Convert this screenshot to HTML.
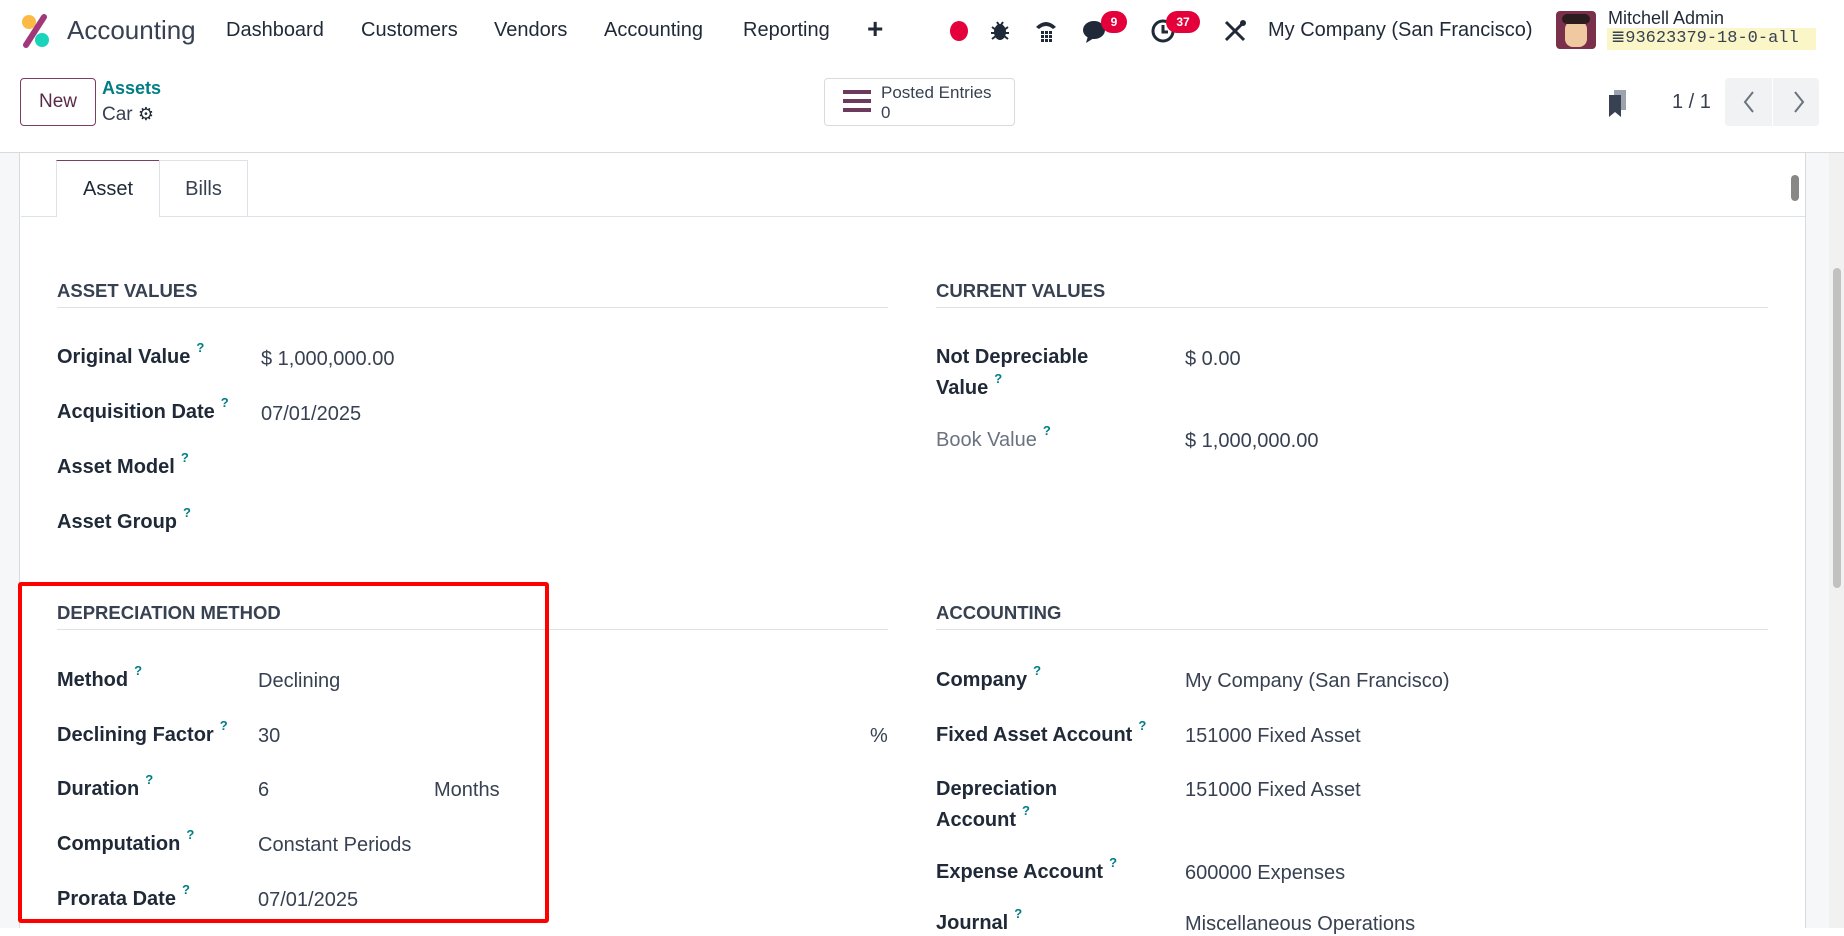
<!DOCTYPE html>
<html><head><meta charset="utf-8"><style>
*{box-sizing:border-box;margin:0;padding:0}
body{width:1844px;height:928px;overflow:hidden;background:#fff;font-family:"Liberation Sans",sans-serif;color:#212529;position:relative}
.a{position:absolute;white-space:nowrap}
.nav{font-size:20px;color:#1f2937;top:19px}
.lbl{font-size:20px;font-weight:bold;color:#1f2937;line-height:23px}
.lbl sup{color:#017e84;font-size:13px;font-weight:bold;margin-left:6px;line-height:0;position:relative;top:-3px}
.val{font-size:20px;color:#374151;line-height:23px}
.h{font-size:18.5px;font-weight:bold;color:#374151}
.line{position:absolute;height:1px;background:#dee2e6}
.badge{position:absolute;background:#e4003a;color:#fff;font-size:12px;font-weight:bold;border-radius:12px;height:22px;line-height:22px;text-align:center}
</style></head><body>
<!-- navbar -->
<svg class="a" style="left:20px;top:14px" width="32" height="34" viewBox="0 0 32 34"><circle cx="9" cy="8" r="7" fill="#fbb945"/><circle cx="22" cy="26" r="7" fill="#1ad3bb"/><path d="M24 3 L6 31" stroke="#a0387a" stroke-width="6" stroke-linecap="round"/></svg>
<div class="a" style="left:67px;top:15px;font-size:26px;color:#374151">Accounting</div>
<div class="a nav" style="left:226px">Dashboard</div>
<div class="a nav" style="left:361px">Customers</div>
<div class="a nav" style="left:494px">Vendors</div>
<div class="a nav" style="left:604px">Accounting</div>
<div class="a nav" style="left:743px">Reporting</div>
<div class="a" style="left:867px;top:13px;font-size:28px;font-weight:bold;color:#1f2937">+</div>
<div class="a" style="left:950px;top:21px;width:18px;height:20px;border-radius:50%;background:#e4003a"></div>
<svg class="a" style="left:990px;top:19px" width="20" height="22" viewBox="0 0 20 22"><ellipse cx="10" cy="13" rx="6" ry="8" fill="#1f2937"/><path d="M2 8l4 3M18 8l-4 3M1 14h5M19 14h-5M2 20l4-3M18 20l-4-3M7 3l2 3M13 3l-2 3" stroke="#1f2937" stroke-width="2"/></svg>
<svg class="a" style="left:1033px;top:17px" width="26" height="28" viewBox="0 0 26 28"><path d="M3 10 Q13 0 23 10 L20 12 Q13 6 6 12Z" fill="#1f2937"/><g fill="#1f2937"><rect x="8" y="14" width="3" height="3"/><rect x="12" y="14" width="3" height="3"/><rect x="16" y="14" width="3" height="3"/><rect x="8" y="18" width="3" height="3"/><rect x="12" y="18" width="3" height="3"/><rect x="16" y="18" width="3" height="3"/><rect x="8" y="22" width="3" height="3"/><rect x="12" y="22" width="3" height="3"/><rect x="16" y="22" width="3" height="3"/></g></svg>
<svg class="a" style="left:1082px;top:18px" width="26" height="26" viewBox="0 0 26 26"><ellipse cx="12" cy="12" rx="11" ry="9" fill="#1f2937"/><path d="M6 18 L4 25 L12 20Z" fill="#1f2937"/></svg>
<div class="badge" style="left:1101px;top:11px;width:26px">9</div>
<svg class="a" style="left:1150px;top:18px" width="26" height="26" viewBox="0 0 26 26"><circle cx="13" cy="13" r="10" fill="none" stroke="#1f2937" stroke-width="3"/><path d="M13 7v7h5" stroke="#1f2937" stroke-width="3" fill="none"/></svg>
<div class="badge" style="left:1166px;top:11px;width:34px">37</div>
<svg class="a" style="left:1222px;top:18px" width="26" height="26" viewBox="0 0 26 26"><path d="M4 4 L22 22" stroke="#1f2937" stroke-width="3"/><path d="M22 4 L4 22" stroke="#1f2937" stroke-width="3"/><circle cx="21" cy="5" r="3" fill="#1f2937"/></svg>
<div class="a" style="left:1268px;top:19px;font-size:20px;color:#1f2937">My Company (San Francisco)</div>
<div class="a" style="left:1556px;top:11px;width:40px;height:38px;border-radius:4px;background:#7a2f4a;overflow:hidden"><div style="position:absolute;left:9px;top:10px;width:22px;height:26px;background:#f0c9a0;border-radius:8px"></div><div style="position:absolute;left:6px;top:3px;width:28px;height:10px;background:#2b1d1d;border-radius:6px"></div></div>
<div class="a" style="left:1608px;top:8px;font-size:18px;color:#1f2937">Mitchell Admin</div>
<div class="a" style="left:1607px;top:28px;width:209px;height:22px;background:#fbf6c8;font-family:'Liberation Mono',monospace;font-size:17px;color:#374151;line-height:22px;padding-left:4px">≣93623379-18-0-all</div>
<!-- control panel -->
<div class="a" style="left:20px;top:78px;width:76px;height:48px;border:1px solid #7a3e63;border-radius:4px;font-size:19px;color:#5b2a47;text-align:center;line-height:46px">New</div>
<div class="a" style="left:102px;top:78px;font-size:18px;color:#017e84;font-weight:bold">Assets</div>
<div class="a" style="left:102px;top:104px;font-size:19px;color:#374151">Car <span style="font-size:18px;color:#1f2937">⚙</span></div>
<div class="a" style="left:824px;top:78px;width:191px;height:48px;border:1px solid #d8dadd;border-radius:4px"></div>
<div class="a" style="left:843px;top:90px;width:28px;height:4px;background:#6b3a5d;box-shadow:0 9px 0 #6b3a5d,0 18px 0 #6b3a5d"></div>
<div class="a" style="left:881px;top:83px;font-size:17px;color:#374151;line-height:20px">Posted Entries<br>0</div>
<svg class="a" style="left:1607px;top:89px" width="22" height="30" viewBox="0 0 22 30"><rect x="7" y="1" width="12" height="20" fill="#9ca3af"/><path d="M2 6h12v22l-6-5-6 5z" fill="#374151"/></svg>
<div class="a" style="left:1672px;top:91px;font-size:20px;color:#374151">1 / 1</div>
<div class="a" style="left:1725px;top:78px;width:94px;height:48px;background:#f1f2f4;border-radius:4px"></div>
<div class="a" style="left:1772px;top:78px;width:1px;height:48px;background:#fff"></div>
<svg class="a" style="left:1740px;top:90px" width="70" height="24"><path d="M13 2 L5 12 L13 22" stroke="#6b7280" stroke-width="2" fill="none"/><path d="M55 2 L63 12 L55 22" stroke="#6b7280" stroke-width="2" fill="none"/></svg>
<div class="line" style="left:0;top:152px;width:1844px;background:#d8dadd"></div>
<!-- content -->
<div class="a" style="left:0;top:153px;width:20px;height:775px;background:#f6f7f9;border-right:1px solid #d8dadd"></div>
<div class="a" style="left:1805px;top:153px;width:24px;height:775px;background:#f6f7f9;border-left:1px solid #d8dadd"></div>
<div class="a" style="left:1791px;top:175px;width:8px;height:26px;background:#888;border-radius:4px"></div>
<div class="a" style="left:1829px;top:153px;width:15px;height:775px;background:#f1f1f1"></div>
<div class="a" style="left:1833px;top:268px;width:8px;height:320px;background:#c1c1c1;border-radius:4px"></div>
<!-- tabs -->
<div class="line" style="left:21px;top:216px;width:1784px"></div>
<div class="a" style="left:56px;top:160px;width:104px;height:57px;border:1px solid #dee2e6;border-top:1px solid #7a3e63;border-bottom:none;background:#fff;font-size:20px;color:#1f2937;text-align:center;line-height:56px">Asset</div>
<div class="a" style="left:159px;top:160px;width:89px;height:56px;border:1px solid #dee2e6;border-bottom:none;font-size:20px;color:#374151;text-align:center;line-height:56px">Bills</div>
<!-- sections -->
<div class="a h" style="left:57px;top:280px">ASSET VALUES</div>
<div class="line" style="left:57px;top:307px;width:831px"></div>
<div class="a h" style="left:936px;top:280px">CURRENT VALUES</div>
<div class="line" style="left:936px;top:307px;width:832px"></div>
<div class="a lbl" style="left:57px;top:346px">Original Value<sup>?</sup></div><div class="a val" style="left:261px;top:348px">$ 1,000,000.00</div>
<div class="a lbl" style="left:57px;top:401px">Acquisition Date<sup>?</sup></div><div class="a val" style="left:261px;top:403px">07/01/2025</div>
<div class="a lbl" style="left:57px;top:456px">Asset Model<sup>?</sup></div>
<div class="a lbl" style="left:57px;top:511px">Asset Group<sup>?</sup></div>
<div class="a lbl" style="left:936px;top:346px;line-height:31px;margin-top:-4px">Not Depreciable<br>Value<sup>?</sup></div><div class="a val" style="left:1185px;top:348px">$ 0.00</div>
<div class="a lbl" style="left:936px;top:429px;color:#6b7280;font-weight:normal">Book Value<sup>?</sup></div><div class="a val" style="left:1185px;top:430px">$ 1,000,000.00</div>
<div class="a h" style="left:57px;top:602px">DEPRECIATION METHOD</div>
<div class="line" style="left:57px;top:629px;width:831px"></div>
<div class="a h" style="left:936px;top:602px">ACCOUNTING</div>
<div class="line" style="left:936px;top:629px;width:832px"></div>
<div class="a lbl" style="left:57px;top:669px">Method<sup>?</sup></div><div class="a val" style="left:258px;top:670px">Declining</div>
<div class="a lbl" style="left:57px;top:724px">Declining Factor<sup>?</sup></div><div class="a val" style="left:258px;top:725px">30</div><div class="a val" style="left:870px;top:725px">%</div>
<div class="a lbl" style="left:57px;top:778px">Duration<sup>?</sup></div><div class="a val" style="left:258px;top:779px">6</div><div class="a val" style="left:434px;top:779px">Months</div>
<div class="a lbl" style="left:57px;top:833px">Computation<sup>?</sup></div><div class="a val" style="left:258px;top:834px">Constant Periods</div>
<div class="a lbl" style="left:57px;top:888px">Prorata Date<sup>?</sup></div><div class="a val" style="left:258px;top:889px">07/01/2025</div>
<div class="a lbl" style="left:936px;top:669px">Company<sup>?</sup></div><div class="a val" style="left:1185px;top:670px">My Company (San Francisco)</div>
<div class="a lbl" style="left:936px;top:724px">Fixed Asset Account<sup>?</sup></div><div class="a val" style="left:1185px;top:725px">151000 Fixed Asset</div>
<div class="a lbl" style="left:936px;top:774px;line-height:31px">Depreciation<br>Account<sup>?</sup></div><div class="a val" style="left:1185px;top:779px">151000 Fixed Asset</div>
<div class="a lbl" style="left:936px;top:861px">Expense Account<sup>?</sup></div><div class="a val" style="left:1185px;top:862px">600000 Expenses</div>
<div class="a lbl" style="left:936px;top:912px">Journal<sup>?</sup></div><div class="a val" style="left:1185px;top:913px">Miscellaneous Operations</div>
<!-- red box -->
<div class="a" style="left:18px;top:582px;width:531px;height:341px;border:4px solid #ff0000;border-radius:3px"></div>
</body></html>
